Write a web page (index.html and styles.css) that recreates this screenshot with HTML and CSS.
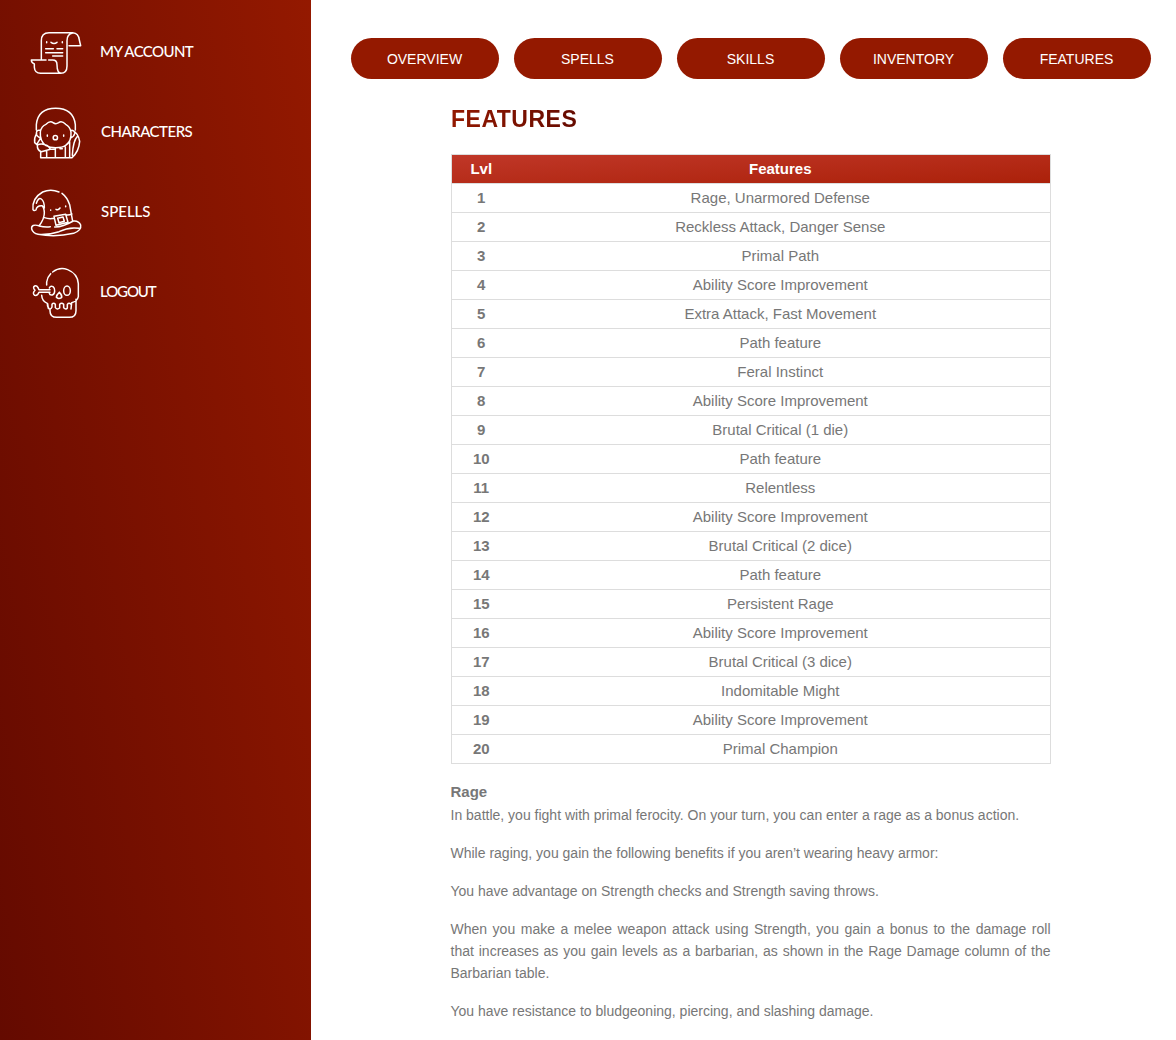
FILE: index.html
```html
<!DOCTYPE html>
<html lang="en">
<head>
<meta charset="utf-8">
<title>Features</title>
<link rel="stylesheet" href="styles.css">
</head>
<body>
<div class="app">
  <aside class="sidebar">
    <nav class="menu">
      <a class="menu-item account">
        <svg class="menu-icon" viewBox="24 6 180 180"><path d="M64 116V62Q64 38 87 38H158Q176 39 178 60Q180 69 182 77H147M158 39Q141 42 141 62V138Q141 160 122 160H62Q44 160 43 142V132Q34 128 34 120H78M86 120H98Q111 120 111 134Q111 159 124 160M80 65V68M127 65V68M93 67Q102 74 111 67M77 86H100M111 86H128M77 98H128M98 108H128"/></svg>
        <span>MY ACCOUNT</span>
      </a>
      <a class="menu-item characters">
        <svg class="menu-icon" viewBox="24 12 180 180"><path d="M49 96V80Q54 31 107 31Q160 31 166 80V96M61 102Q64 84 78 79Q90 67 99 74Q107 80 116 74Q125 67 137 79Q150 86 153 102Q155 130 137 142Q128 149 107 149Q89 149 78 143Q59 130 61 102M60 97Q50 94 49 106Q49 115 61 120M50 107Q42 119 44 134L50 139L61 122M52 141Q51 157 64 161L91 154Q88 144 75 140Q62 136 52 141M62 162V179H156Q177 160 179 130Q175 105 157 97M155 97Q165 98 164 107Q162 116 153 119M149 131V178M173 114Q159 128 157 172M80 160V178M106 152V178M136 147V178M88 154H106M120 152H127M82 111V115M131 111V115"/><circle cx="106" cy="119" r="6.5"/></svg>
        <span>CHARACTERS</span>
      </a>
      <a class="menu-item spells">
        <svg class="menu-icon" viewBox="24 12 180 180"><path d="M117 42Q92 31 68 42Q35 61 39 95Q42 100 48 96Q50 82 66 83Q72 88 73 103Q74 121 57 144M49 76Q55 57 64 63Q73 69 73 90M126 46Q141 57 149 80L158 130M73 119Q87 124 102 121M140 111Q147 112 156 108M57 143Q33 137 35 153Q39 166 54 169Q106 179 161 166Q185 157 182 141Q176 127 160 129Q126 148 104 147M57 144Q76 148 91 146M54 169Q87 171 117 161Q147 146 177 151M102 115L137 109L144 133L108 142ZM113 121L129 117L133 130L117 134ZM92 96V97M137 84V86M108 94Q115 98 120 90"/></svg>
        <span>SPELLS</span>
      </a>
      <a class="menu-item logout">
        <svg class="menu-icon" viewBox="24 12 180 180"><path d="M80 81V72Q82 57 92 47M98 42Q119 26 143 35Q173 47 175 77V116Q172 130 155 134L153 153M168 124V158Q168 178 148 178H110Q90 178 90 158V154Q82 150 82 136Q66 130 65 112M90 95H57Q52 81 44 84Q37 88 45 97Q36 106 44 112Q53 114 57 103H90M88 90Q91 82 99 86Q105 91 104 99Q104 108 97 111Q89 112 88 106M83 137L85 151Q92 156 96 147V139Q101 133 106 139V149Q111 156 119 150V139Q125 132 131 139V149Q138 156 142 150V139Q147 132 153 139M118 103Q109 111 109 118Q114 124 125 119Q127 111 118 103"/><ellipse cx="141" cy="98" rx="10" ry="14"/></svg>
        <span>LOGOUT</span>
      </a>
    </nav>
  </aside>
  <main class="content">
    <nav class="tabs">
      <a class="tab">OVERVIEW</a><a class="tab">SPELLS</a><a class="tab">SKILLS</a><a class="tab">INVENTORY</a><a class="tab">FEATURES</a>
    </nav>
    <section class="features">
      <h1 class="title"><span class="title-text">FEATURES</span></h1>
      <table class="levels">
        <thead><tr><th class="lvl">Lvl</th><th>Features</th></tr></thead>
        <tbody>
          <tr><th>1</th><td>Rage, Unarmored Defense</td></tr>
          <tr><th>2</th><td>Reckless Attack, Danger Sense</td></tr>
          <tr><th>3</th><td>Primal Path</td></tr>
          <tr><th>4</th><td>Ability Score Improvement</td></tr>
          <tr><th>5</th><td>Extra Attack, Fast Movement</td></tr>
          <tr><th>6</th><td>Path feature</td></tr>
          <tr><th>7</th><td>Feral Instinct</td></tr>
          <tr><th>8</th><td>Ability Score Improvement</td></tr>
          <tr><th>9</th><td>Brutal Critical (1 die)</td></tr>
          <tr><th>10</th><td>Path feature</td></tr>
          <tr><th>11</th><td>Relentless</td></tr>
          <tr><th>12</th><td>Ability Score Improvement</td></tr>
          <tr><th>13</th><td>Brutal Critical (2 dice)</td></tr>
          <tr><th>14</th><td>Path feature</td></tr>
          <tr><th>15</th><td>Persistent Rage</td></tr>
          <tr><th>16</th><td>Ability Score Improvement</td></tr>
          <tr><th>17</th><td>Brutal Critical (3 dice)</td></tr>
          <tr><th>18</th><td>Indomitable Might</td></tr>
          <tr><th>19</th><td>Ability Score Improvement</td></tr>
          <tr><th>20</th><td>Primal Champion</td></tr>
        </tbody>
      </table>
      <article class="feature">
        <h2>Rage</h2>
        <p>In battle, you fight with primal ferocity. On your turn, you can enter a rage as a bonus action.</p>
        <p>While raging, you gain the following benefits if you aren’t wearing heavy armor:</p>
        <p>You have advantage on Strength checks and Strength saving throws.</p>
        <p>When you make a melee weapon attack using Strength, you gain a bonus to the damage roll that increases as you gain levels as a barbarian, as shown in the Rage Damage column of the Barbarian table.</p>
        <p>You have resistance to bludgeoning, piercing, and slashing damage.</p>
      </article>
    </section>
  </main>
</div>
</body>
</html>
```

FILE: styles.css
```css
* { box-sizing: border-box; }
body {
  margin: 0;
  background: #fff;
  color: #777;
  font-family: "Liberation Sans", Arial, sans-serif;
}
.app { display: flex; height: 1040px; overflow: hidden; }
.sidebar {
  flex: 0 0 311px;
  padding: 12px 0 0 28px;
  background: linear-gradient(80deg, #640a00, #941900);
}
.menu-item {
  display: flex;
  align-items: center;
  gap: 12px;
  height: 80px;
  color: #fff;
  font: 500 15px/20px Lato, sans-serif;
  white-space: nowrap;
}
.menu-item span { padding-bottom: 2px; }
.account { letter-spacing: -0.6px; }
.characters { gap: 13px; letter-spacing: -0.5px; }
.spells { gap: 13px; }
.logout { letter-spacing: -1.1px; }
.menu-icon {
  width: 60px;
  height: 60px;
  fill: none;
  stroke: #fff;
  stroke-width: 4.5;
  stroke-linecap: round;
  stroke-linejoin: round;
}
.content { flex: 1; padding: 38px 25px 0 40px; }
.tabs { display: flex; gap: 15px; }
.tab {
  width: 148px;
  height: 41px;
  padding-right: 1px;
  border-radius: 20.5px;
  background: #941900;
  color: #fff;
  font-size: 14px;
  line-height: 42px;
  text-align: center;
}
.features { width: 600px; margin: 0 auto; }
.title {
  margin: 25px 0 20px;
  font-size: 23px;
  line-height: 30px;
  letter-spacing: 0.5px;
}
.title-text {
  background: linear-gradient(80deg, #941900, #640a00);
  background-clip: text;
  -webkit-background-clip: text;
  color: transparent;
}
.levels {
  width: 600px;
  border: 1px solid #ddd;
  border-collapse: collapse;
  table-layout: fixed;
  font-size: 15px;
  line-height: 20px;
  text-align: center;
}
.levels tr { height: 29px; border-bottom: 1px solid #ddd; }
.levels th, .levels td { padding: 4px 0; }
.levels .lvl { width: 59px; }
.levels thead tr {
  background: linear-gradient(177deg, #c03728, #ab210a);
  color: #fff;
}
.feature { margin-left: -0.5px; width: 600px; font-size: 14px; line-height: 22px; }
.feature h2 { margin: 17px 0 1px; font-size: 15px; line-height: 22px; }
.feature p { margin: 0 0 16px; text-align: justify; }
```
